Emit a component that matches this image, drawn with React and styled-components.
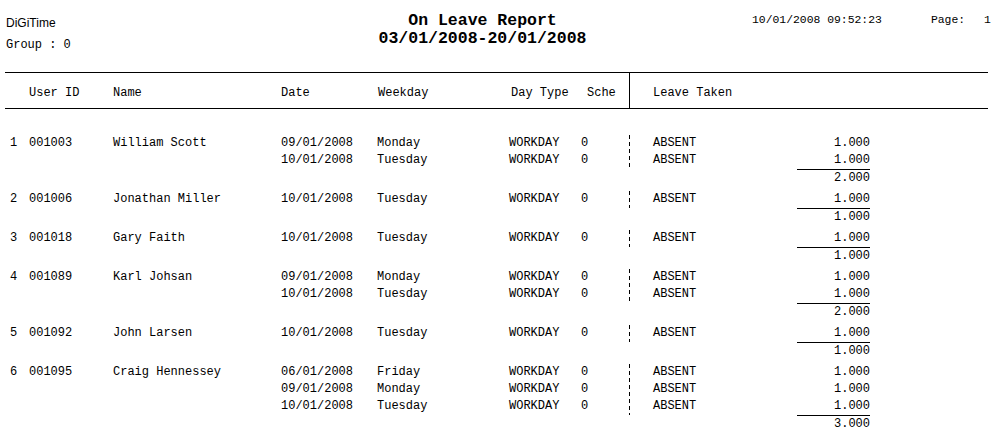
import React from "react";
import styled, { createGlobalStyle } from "styled-components";

const GlobalStyle = createGlobalStyle`
  html, body {
    margin: 0;
    padding: 0;
    background: #fff;
  }
  body {
    font-family: "Liberation Mono", "Courier New", monospace;
    font-size: 12px;
    color: #000;
  }
`;

const groups = [
  {
    no: 1,
    id: "001003",
    name: "William Scott",
    total: "2.000",
    lines: [
      { date: "09/01/2008", day: "Monday", type: "WORKDAY", sche: "0", leave: "ABSENT", value: "1.000" },
      { date: "10/01/2008", day: "Tuesday", type: "WORKDAY", sche: "0", leave: "ABSENT", value: "1.000" },
    ],
  },
  {
    no: 2,
    id: "001006",
    name: "Jonathan Miller",
    total: "1.000",
    lines: [
      { date: "10/01/2008", day: "Tuesday", type: "WORKDAY", sche: "0", leave: "ABSENT", value: "1.000" },
    ],
  },
  {
    no: 3,
    id: "001018",
    name: "Gary Faith",
    total: "1.000",
    lines: [
      { date: "10/01/2008", day: "Tuesday", type: "WORKDAY", sche: "0", leave: "ABSENT", value: "1.000" },
    ],
  },
  {
    no: 4,
    id: "001089",
    name: "Karl Johsan",
    total: "2.000",
    lines: [
      { date: "09/01/2008", day: "Monday", type: "WORKDAY", sche: "0", leave: "ABSENT", value: "1.000" },
      { date: "10/01/2008", day: "Tuesday", type: "WORKDAY", sche: "0", leave: "ABSENT", value: "1.000" },
    ],
  },
  {
    no: 5,
    id: "001092",
    name: "John Larsen",
    total: "1.000",
    lines: [
      { date: "10/01/2008", day: "Tuesday", type: "WORKDAY", sche: "0", leave: "ABSENT", value: "1.000" },
    ],
  },
  {
    no: 6,
    id: "001095",
    name: "Craig Hennessey",
    total: "3.000",
    lines: [
      { date: "06/01/2008", day: "Friday", type: "WORKDAY", sche: "0", leave: "ABSENT", value: "1.000" },
      { date: "09/01/2008", day: "Monday", type: "WORKDAY", sche: "0", leave: "ABSENT", value: "1.000" },
      { date: "10/01/2008", day: "Tuesday", type: "WORKDAY", sche: "0", leave: "ABSENT", value: "1.000" },
    ],
  },
];

function App() {
  return (
    <>
      <GlobalStyle />
      <Report>
        <TopBar>
          <Company>
            <Brand>DiGiTime</Brand>
            <GroupLabel>Group : 0</GroupLabel>
          </Company>
          <Title>
            <div>On Leave Report</div>
            <div>03/01/2008-20/01/2008</div>
          </Title>
          <PrintInfo>
            <Stamp>10/01/2008 09:52:23</Stamp>
            <PageLabel>Page:</PageLabel>
            <PageNo>1</PageNo>
          </PrintInfo>
        </TopBar>

        <HeaderRow>
          <span />
          <HeadCell>User ID</HeadCell>
          <HeadCell>Name</HeadCell>
          <HeadCell>Date</HeadCell>
          <HeadCell>Weekday</HeadCell>
          <HeadCell>Day Type</HeadCell>
          <HeadCell>Sche</HeadCell>
          <HeadDivider />
          <HeadCell>Leave Taken</HeadCell>
        </HeaderRow>

        <Body>
          {groups.map((g) => (
            <Group key={g.no}>
              <Lines>
                <Details>
                  {g.lines.map((l, i) => (
                    <DetailRow key={i}>
                      <span />
                      <Cell>{i === 0 ? g.no : ""}</Cell>
                      <Cell>{i === 0 ? g.id : ""}</Cell>
                      <Cell>{i === 0 ? g.name : ""}</Cell>
                      <Cell>{l.date}</Cell>
                      <Cell>{l.day}</Cell>
                      <Cell>{l.type}</Cell>
                      <Cell>{l.sche}</Cell>
                    </DetailRow>
                  ))}
                </Details>
                <Dash />
                <Leaves>
                  {g.lines.map((l, i) => (
                    <LeaveRow key={i}>
                      <Cell>{l.leave}</Cell>
                      <Amount>{l.value}</Amount>
                    </LeaveRow>
                  ))}
                </Leaves>
              </Lines>
              <TotalRow>
                <Total>{g.total}</Total>
              </TotalRow>
            </Group>
          ))}
        </Body>
      </Report>
    </>
  );
}

const Report = styled.div`
  width: 995px;
  height: 437px;
  overflow: hidden;
  background: #fff;
`;

const TopBar = styled.div`
  display: grid;
  grid-template-columns: 300px 365px 1fr;
  height: 72px;
`;

const Company = styled.div`
  padding: 15px 0 0 6px;
`;

const Brand = styled.div`
  font-family: "Liberation Sans", Arial, sans-serif;
  font-size: 12px;
  line-height: 16px;
`;

const GroupLabel = styled.div`
  margin-top: 6px;
  line-height: 16px;
`;

const Title = styled.div`
  padding-top: 12px;
  text-align: center;
  font-weight: bold;
  font-size: 16.5px;
  line-height: 18px;
`;

const PrintInfo = styled.div`
  display: flex;
  align-items: flex-start;
  padding: 12px 0 0 87px;
  font-size: 11.4px;
  line-height: 17px;
  white-space: nowrap;
`;

const Stamp = styled.span``;

const PageLabel = styled.span`
  margin-left: 49px;
`;

const PageNo = styled.span`
  margin-left: 19px;
`;

const HeaderRow = styled.div`
  display: grid;
  grid-template-columns: 23px 84px 168px 97px 133px 76px 43px 23px 1fr;
  margin-left: 5px;
  width: 983px;
  height: 37px;
  box-sizing: border-box;
  border-top: 1px solid #000;
  border-bottom: 1px solid #000;
`;

const HeadCell = styled.div`
  padding: 12px 0 0 1px;
  line-height: 17px;
  white-space: nowrap;
`;

const HeadDivider = styled.div`
  border-left: 1px solid #000;
`;

const Body = styled.div`
  margin: 26px 0 0 5px;
`;

const Group = styled.div`
  margin-bottom: 5px;
`;

const Lines = styled.div`
  display: flex;
`;

const Details = styled.div`
  width: 624px;
`;

const DetailRow = styled.div`
  display: grid;
  grid-template-columns: 4px 19px 84px 168px 96px 132px 72px 49px;
  height: 17px;
`;

const Cell = styled.div`
  padding-left: 1px;
  line-height: 17px;
  white-space: nowrap;
`;

const Dash = styled.div`
  width: 1px;
  background: repeating-linear-gradient(
    to bottom,
    #000 0 4px,
    transparent 4px 7px
  );
`;

const Leaves = styled.div`
  padding-left: 22px;
`;

const LeaveRow = styled.div`
  display: grid;
  grid-template-columns: 145px 73px;
  height: 17px;
`;

const Amount = styled.div`
  line-height: 17px;
  text-align: right;
`;

const TotalRow = styled.div`
  padding-left: 792px;
`;

const Total = styled.div`
  width: 73px;
  height: 17px;
  box-sizing: border-box;
  border-top: 1px solid #000;
  line-height: 16px;
  text-align: right;
`;

export default App;
